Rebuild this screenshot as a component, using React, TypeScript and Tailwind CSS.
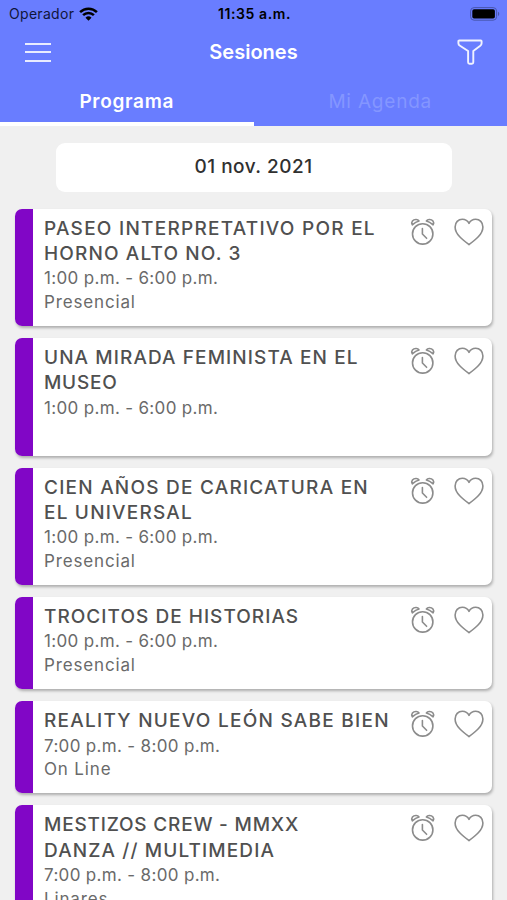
import { useState } from "react"

interface Session {
    id: number;
    title: { text: string; tracking: string }[];
    time: string;
    place: string;
}

const sessions: Session[] = [
    {
        id: 1,
        title: [
            { text: "PASEO INTERPRETATIVO POR EL", tracking: "tracking-[1.25px]" },
            { text: "HORNO ALTO NO. 3", tracking: "tracking-[1.13px]" },
        ],
        time: "1:00 p.m. - 6:00 p.m.",
        place: "Presencial",
    },
    {
        id: 2,
        title: [
            { text: "UNA MIRADA FEMINISTA EN EL", tracking: "tracking-[1.09px]" },
            { text: "MUSEO", tracking: "tracking-[0.75px]" },
        ],
        time: "1:00 p.m. - 6:00 p.m.",
        place: "",
    },
    {
        id: 3,
        title: [
            { text: "CIEN AÑOS DE CARICATURA EN", tracking: "tracking-[1.23px]" },
            { text: "EL UNIVERSAL", tracking: "tracking-[1.2px]" },
        ],
        time: "1:00 p.m. - 6:00 p.m.",
        place: "Presencial",
    },
    {
        id: 4,
        title: [{ text: "TROCITOS DE HISTORIAS", tracking: "tracking-[1.03px]" }],
        time: "1:00 p.m. - 6:00 p.m.",
        place: "Presencial",
    },
    {
        id: 5,
        title: [{ text: "REALITY NUEVO LEÓN SABE BIEN", tracking: "tracking-[1.25px]" }],
        time: "7:00 p.m. - 8:00 p.m.",
        place: "On Line",
    },
    {
        id: 6,
        title: [
            { text: "MESTIZOS CREW - MMXX", tracking: "tracking-[0.8px]" },
            { text: "DANZA // MULTIMEDIA", tracking: "tracking-[1.12px]" },
        ],
        time: "7:00 p.m. - 8:00 p.m.",
        place: "Linares",
    },
]

const AlarmIcon = () => (
    <svg width="26" height="28" viewBox="0 0 26 28" fill="none" stroke="#8c8c8c" strokeWidth="1.6" strokeLinecap="round" strokeLinejoin="round">
        <circle cx="12.7" cy="15.9" r="10.2" />
        <path d="M12.4 10.5v5.500l4.200 4.300" />
        <path d="M2.300 6.800C.7 4.200 3 1.300 6.200 1.500c1.300.1 2.200.6 2.800 1.500C6.500 3.700 4.300 5.100 2.300 6.800z" />
        <path d="M23.100 6.800c1.600-2.600-.7-5.500-3.900-5.300-1.300.1-2.200.6-2.800 1.500 2.500.7 4.700 2.100 6.700 3.800z" />
    </svg>
)

const HeartIcon = () => (
    <svg width="30" height="28" viewBox="0 0 30 28" fill="none" stroke="#8c8c8c" strokeWidth="1.6" strokeLinejoin="round">
        <path d="M15 26.600C9.500 22.500 1.100 16.500 1.100 8.900 1.100 4.500 4.300 1.200 8.300 1.200c2.900 0 5.400 1.500 6.700 4.200 1.300-2.700 3.800-4.200 6.700-4.200 4 0 7.200 3.300 7.200 7.700 0 7.600-8.400 13.600-13.900 17.700z" />
    </svg>
)

const StatusBar = () => (
    <div className="grid h-[27px] grid-cols-3 items-center pr-[7px] pl-[9px] text-black">
        <div className="flex items-center gap-[5px]">
            <span className="text-[14px] tracking-[0.3px] text-[#10153a]">Operador</span>
            <svg width="19" height="14" viewBox="0 0 19 14" fill="none" stroke="#000" strokeWidth="2.5">
                <path d="M1.100 5.200a12 12 0 0 1 16.800 0" />
                <path d="M4.100 8.200a7.700 7.700 0 0 1 10.800 0" />
                <path d="M9.500 13.700 6.500 10.700a4.300 4.300 0 0 1 6 0z" fill="#000" stroke="none" />
            </svg>
        </div>
        <span className="text-center text-[14px] font-semibold tracking-[0.6px]">11:35 a.m.</span>
        <div className="flex items-center justify-end">
            <svg width="30" height="14" viewBox="0 0 30 14">
                <rect x=".6" y=".6" width="26" height="12.6" rx="3.5" fill="none" stroke="#4856ae" strokeWidth="1" />
                <rect x="2.3" y="2.3" width="22.6" height="9.2" rx="1.8" fill="#000" />
                <path d="M28 4.800c1.700.6 1.700 3.600 0 4.200z" fill="#4856ae" />
            </svg>
        </div>
    </div>
)

const SessionCard = ({ session }: { session: Session }) => (
    <div className="flex overflow-hidden rounded-[7px] bg-white shadow-[1px_2px_3px_rgba(0,0,0,0.28)]">
        <div className="w-[18px] shrink-0 bg-[#8106c6]" />
        <div className="min-w-0 flex-1 pt-[7px] pb-[11.7px] pl-[11px] whitespace-nowrap">
            <h2 className="mb-[1px] text-[19px] leading-[25.4px] font-medium text-[#505050]">
                {session.title.map((line) => (
                    <span key={line.text} className={`block ${line.tracking}`}>{line.text}</span>
                ))}
            </h2>
            <p className="h-[23.5px] text-[17px] leading-[23.5px] tracking-[0.33px] text-[#6a6a6a]">{session.time}</p>
            <p className="h-[23.5px] text-[17px] leading-[23.5px] tracking-[0.85px] text-[#6a6a6a]">{session.place}</p>
        </div>
        <div className="flex shrink-0 items-start gap-[18px] pt-[9px] pr-[8px]">
            <button><AlarmIcon /></button>
            <button><HeartIcon /></button>
        </div>
    </div>
)

export default function App() {
    const [tab, setTab] = useState("programa")

    return (
        <div className="h-[900px] w-[507px] overflow-hidden bg-[#f0f0f0] font-['Inter',sans-serif]">
            <header className="h-[125.5px] bg-[#697dff] text-white">
                <StatusBar />
                <div className="grid h-[50px] grid-cols-3 items-center px-6">
                    <button className="flex h-[21px] w-7 flex-col justify-between py-px pl-[1px]">
                        <span className="h-[2px] w-[26px] bg-[#e9ecff]" />
                        <span className="h-[2px] w-[26px] bg-[#e9ecff]" />
                        <span className="h-[2px] w-[26px] bg-[#e9ecff]" />
                    </button>
                    <h1 className="text-center text-[20px] font-semibold">Sesiones</h1>
                    <button className="flex justify-end">
                        <svg width="26" height="26" viewBox="0 0 26 26" fill="none" stroke="#f0f2ff" strokeWidth="1.9" strokeLinejoin="round">
                            <path d="M2.200 1.500h21.600c.5 0 .8.3.8.8v1.900c0 1.100-.4 1.900-1.300 2.600L16.300 12v11.200c0 .9-.6 1.500-1.400 1.500h-2.400c-.8 0-1.400-.6-1.400-1.500V12L3 6.800C1.900 6.100 1.400 5.300 1.400 4.200V2.300c0-.5.3-.8.8-.8z" />
                        </svg>
                    </button>
                </div>
                <nav className="grid h-[48.5px] grid-cols-2 text-[19px]">
                    <button
                        onClick={() => setTab("programa")}
                        className={tab === "programa" ? "border-b-4 border-white pt-1.5 font-semibold tracking-[0.7px] text-white" : "border-b-4 border-transparent pt-1.5 tracking-[0.8px] text-[#8496ff]"}
                    >
                        Programa
                    </button>
                    <button
                        onClick={() => setTab("agenda")}
                        className={tab === "agenda" ? "border-b-4 border-white pt-1.5 font-semibold tracking-[0.7px] text-white" : "border-b-4 border-transparent pt-1.5 tracking-[0.8px] text-[#8496ff]"}
                    >
                        Mi Agenda
                    </button>
                </nav>
            </header>

            <div className="mx-auto mt-[17px] flex h-[49px] w-[396px] items-center justify-center rounded-[9px] bg-white text-[19px] font-medium tracking-[0.5px] text-[#303030]">
                01 nov. 2021
            </div>

            <main className="mt-[17px] flex flex-col gap-[12px] pr-[15px] pl-[15px]">
                {sessions.map((session) => (
                    <SessionCard key={session.id} session={session} />
                ))}
            </main>
        </div>
    )
}
